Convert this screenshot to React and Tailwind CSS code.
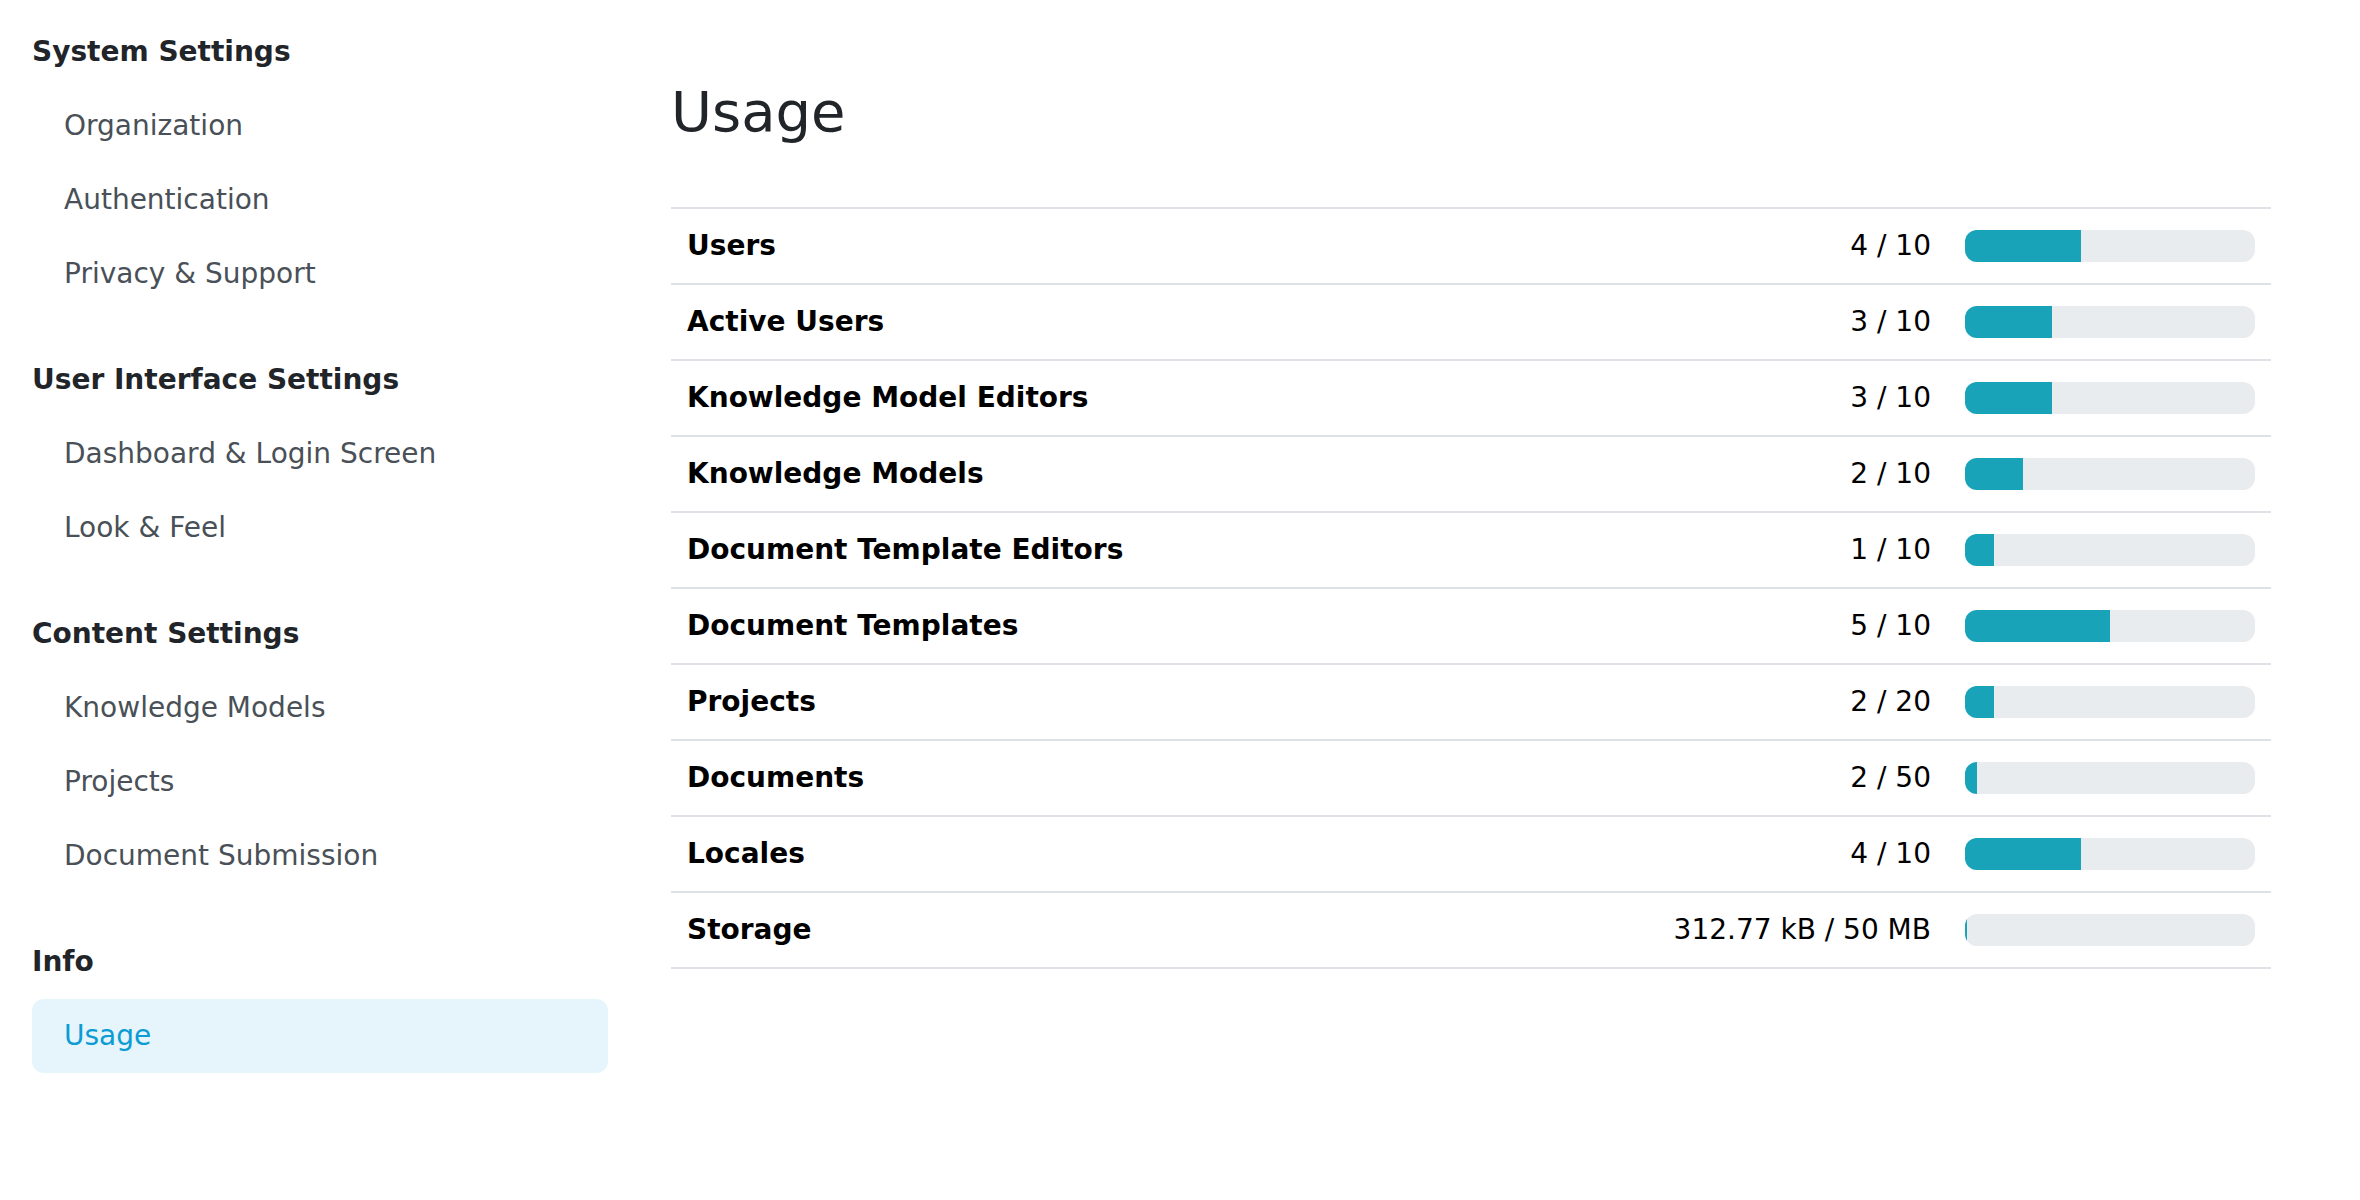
const groups = [
  { title: 'System Settings', items: ['Organization', 'Authentication', 'Privacy & Support'] },
  { title: 'User Interface Settings', items: ['Dashboard & Login Screen', 'Look & Feel'] },
  { title: 'Content Settings', items: ['Knowledge Models', 'Projects', 'Document Submission'] },
  { title: 'Info', items: ['Usage'] },
]

const usage = [
  { label: 'Users', value: '4 / 10', pct: 40 },
  { label: 'Active Users', value: '3 / 10', pct: 30 },
  { label: 'Knowledge Model Editors', value: '3 / 10', pct: 30 },
  { label: 'Knowledge Models', value: '2 / 10', pct: 20 },
  { label: 'Document Template Editors', value: '1 / 10', pct: 10 },
  { label: 'Document Templates', value: '5 / 10', pct: 50 },
  { label: 'Projects', value: '2 / 20', pct: 10 },
  { label: 'Documents', value: '2 / 50', pct: 4 },
  { label: 'Locales', value: '4 / 10', pct: 40 },
  { label: 'Storage', value: '312.77 kB / 50 MB', pct: 0.6 },
]

function Sidebar({ active }) {
  return (
    <aside className="w-[608px] shrink-0 pl-[32px] pt-[15px]">
      {groups.map((g, i) => (
        <div key={g.title} className={i > 0 ? 'mt-[32px]' : ''}>
          <div className="flex h-[74px] items-center text-[28px] font-bold text-[#212529]">{g.title}</div>
          {g.items.map((item) => (
            <div
              key={item}
              className={
                'flex h-[74px] items-center rounded-[12px] px-[32px] text-[28px] ' +
                (item === active ? 'bg-[#e6f4fb] text-[#0b9cd4]' : 'text-[#495057]')
              }
            >
              {item}
            </div>
          ))}
        </div>
      ))}
    </aside>
  )
}

function Bar({ pct }) {
  return (
    <div className="h-[32px] w-[290px] overflow-hidden rounded-[12px] bg-[#e9ecef]">
      <div className="h-full bg-[#19a3b8]" style={{ width: pct + '%' }} />
    </div>
  )
}

export default function App() {
  return (
    <div className="flex min-h-screen bg-white font-['DejaVu_Sans',sans-serif]">
      <Sidebar active="Usage" />
      <main className="ml-[63px] w-[1600px] pt-[78px]">
        <h1 className="mb-[62px] text-[56px] leading-[1.2] font-normal text-[#212529]">Usage</h1>
        <div className="border-t-2 border-[#dee2e6]">
          {usage.map((u) => (
            <div key={u.label} className="flex h-[76px] items-center border-b-2 border-[#dee2e6] text-[28px] text-black">
              <div className="flex-1 px-[16px] font-bold">{u.label}</div>
              <div className="pr-[18px] text-right">{u.value}</div>
              <div className="px-[16px]">
                <Bar pct={u.pct} />
              </div>
            </div>
          ))}
        </div>
      </main>
    </div>
  )
}
